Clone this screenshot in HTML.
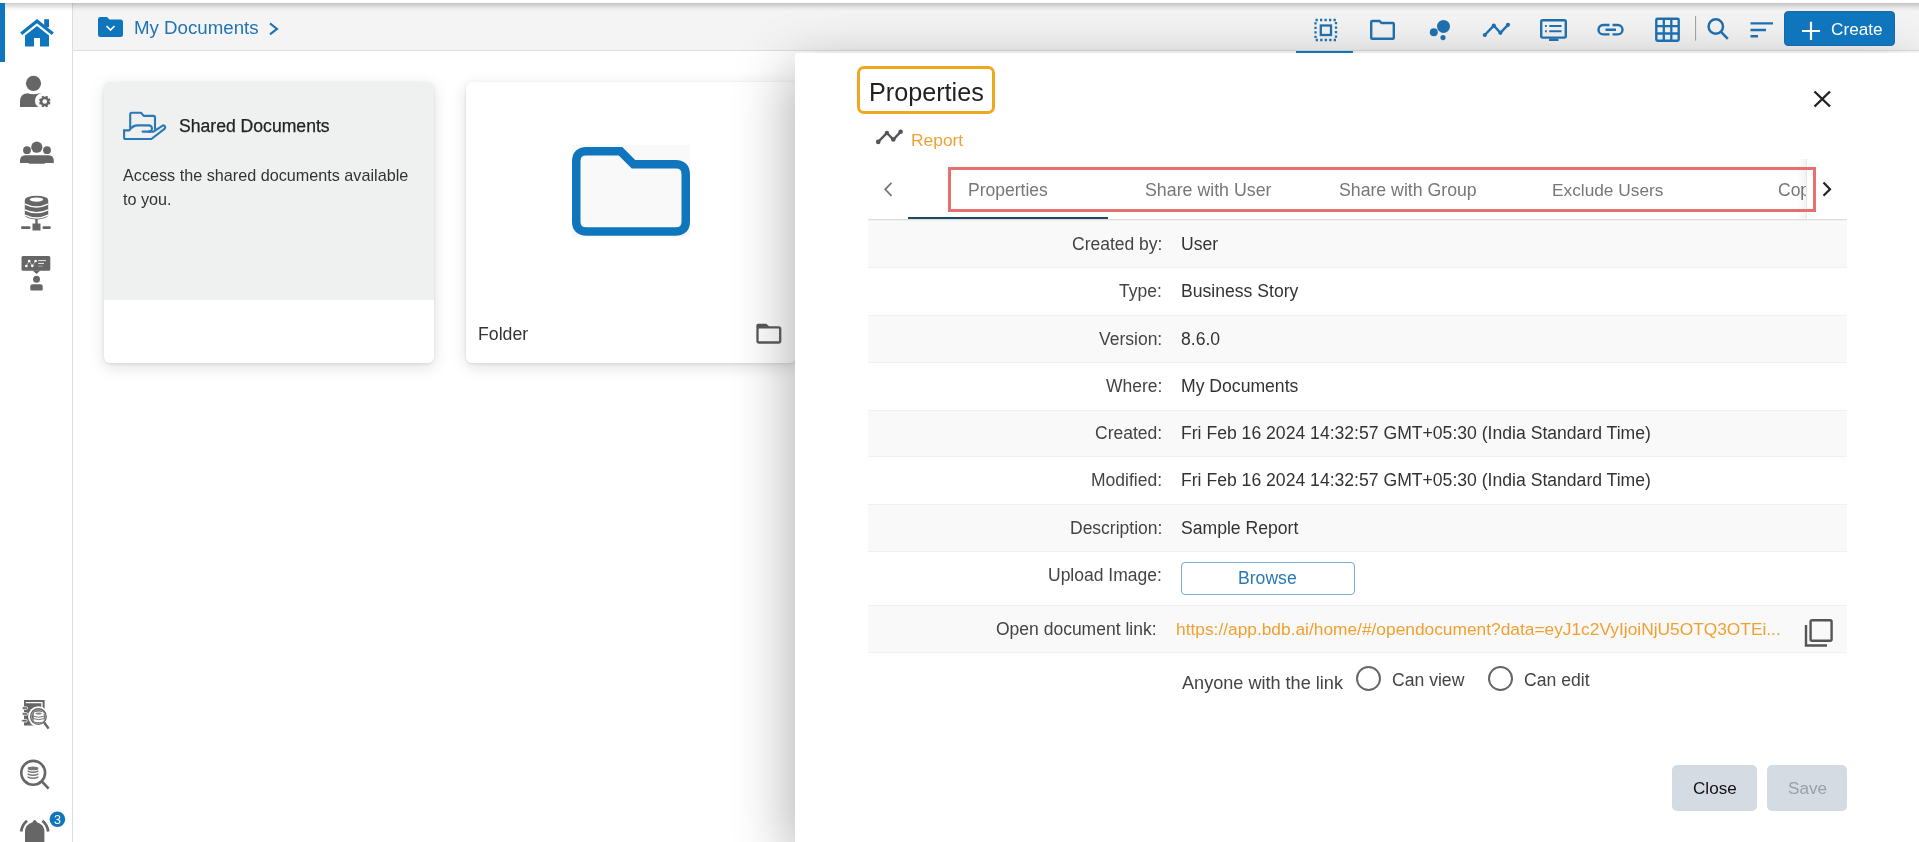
<!DOCTYPE html>
<html><head><meta charset="utf-8">
<style>
*{box-sizing:border-box;margin:0;padding:0}
html,body{width:1919px;height:842px;overflow:hidden;background:#fff;font-family:"Liberation Sans",sans-serif;color:#333}
.abs{position:absolute}
#sidebar{position:absolute;left:0;top:3px;width:73px;height:839px;background:#fff;border-right:1px solid #dcdcdc}
#activebar{position:absolute;left:0;top:3px;width:5px;height:59px;background:#0f75bc;z-index:60}
#header{position:absolute;left:73px;top:3px;width:1846px;height:48px;background:#f4f4f4;border-bottom:1px solid #dedede}
#topshadow{position:absolute;left:0;top:3px;width:1919px;height:8px;background:linear-gradient(rgba(0,0,0,.2),rgba(0,0,0,.1) 40%,rgba(0,0,0,.03) 75%,rgba(0,0,0,0));z-index:50}
.card{position:absolute;top:82px;height:281px;border-radius:6px;background:#fff;box-shadow:0 4px 16px rgba(0,0,0,.13),0 1px 3px rgba(0,0,0,.09);overflow:hidden}
#panel{position:absolute;left:795px;top:53px;width:1124px;height:789px;background:#fff;box-shadow:-6px 14px 56px rgba(0,0,0,.30);border-top-left-radius:3px}
.t{position:absolute;white-space:nowrap;line-height:1;will-change:transform}
.row{position:absolute;left:868px;width:979px}
.row.g{background:#f9f9f9}
.row{box-shadow:inset 0 1px 0 #f0f0f0}
.lbl{position:absolute;will-change:transform;right:685px;white-space:nowrap;font-size:17.5px;color:#444;line-height:1}
.val{position:absolute;will-change:transform;left:313px;white-space:nowrap;font-size:17.6px;color:#333;line-height:1}
#icons{position:absolute;left:0;top:0;width:1919px;height:842px;z-index:100}
</style></head>
<body>
<div id="sidebar"></div>
<div id="activebar"></div>
<div id="header">
  <div class="t" style="left:61px;top:16px;font-size:18.7px;color:#1f74b5">My Documents</div>
</div>
<div id="topshadow"></div>

<!-- cards -->
<div class="card" style="left:104px;width:330px;">
  <div class="abs" style="left:0;top:0;width:330px;height:218px;background:#eff0f0"></div>
  <div class="t" style="left:75px;top:36px;font-size:17.6px;color:#222;-webkit-text-stroke:0.25px #222">Shared Documents</div>
  <div class="t" style="left:19px;top:81px;font-size:16.2px;color:#333;line-height:24px">Access the shared documents available<br>to you.</div>
</div>
<div class="card" style="left:466px;width:330px;">
  <div class="t" style="left:12px;top:244px;font-size:17.7px;color:#333">Folder</div>
</div>

<div id="panel"></div>

<!-- panel content -->
<div class="abs" style="left:857px;top:66px;width:138px;height:48px;border:3px solid #efa71e;border-radius:7px;z-index:10"></div>
<div class="t" style="left:869px;top:80px;font-size:25.2px;color:#222;z-index:11">Properties</div>
<div class="t" style="left:911px;top:132px;font-size:17.4px;color:#eea234;z-index:11">Report</div>

<!-- tabs -->
<div class="abs" style="left:908px;top:159px;width:899px;height:60px;overflow:hidden;z-index:10">
  <div class="t" style="left:60px;top:23px;font-size:17.5px;color:#777">Properties</div>
  <div class="t" style="left:237px;top:23px;font-size:17.8px;color:#777">Share with User</div>
  <div class="t" style="left:431px;top:23px;font-size:17.7px;color:#777">Share with Group</div>
  <div class="t" style="left:644px;top:23px;font-size:17.3px;color:#777">Exclude Users</div>
  <div class="t" style="left:870px;top:23px;font-size:17.5px;color:#777">Copy Link</div>
  <div class="abs" style="left:0;top:58px;width:200px;height:2px;background:#1f4c62"></div>
  <div class="abs" style="left:889px;top:0;width:10px;height:60px;background:linear-gradient(90deg,rgba(0,0,0,0),rgba(0,0,0,.05))"></div>
</div>
<div class="abs" style="left:1806px;top:159px;width:1px;height:60px;background:#e6e6e6;z-index:12"></div>
<div class="abs" style="left:948px;top:167px;width:868px;height:45px;border:3.6px solid #e5706f;z-index:20"></div>
<div class="abs" style="left:868px;top:219px;width:979px;height:1px;background:#dedede;z-index:10"></div>

<!-- rows -->
<div class="row g" style="top:220px;height:47px"><div class="lbl" style="top:16px">Created by:</div><div class="val" style="top:16px">User</div></div>
<div class="row" style="top:267px;height:48px"><div class="lbl" style="top:16px">Type:</div><div class="val" style="top:16px">Business Story</div></div>
<div class="row g" style="top:315px;height:47px"><div class="lbl" style="top:16px">Version:</div><div class="val" style="top:16px">8.6.0</div></div>
<div class="row" style="top:362px;height:48px"><div class="lbl" style="top:16px">Where:</div><div class="val" style="top:16px">My Documents</div></div>
<div class="row g" style="top:410px;height:46px"><div class="lbl" style="top:15px">Created:</div><div class="val" style="top:15px">Fri Feb 16 2024 14:32:57 GMT+05:30 (India Standard Time)</div></div>
<div class="row" style="top:456px;height:48px"><div class="lbl" style="top:16px">Modified:</div><div class="val" style="top:16px">Fri Feb 16 2024 14:32:57 GMT+05:30 (India Standard Time)</div></div>
<div class="row g" style="top:504px;height:47px"><div class="lbl" style="top:16px">Description:</div><div class="val" style="top:16px">Sample Report</div></div>
<div class="row" style="top:551px;height:54px"><div class="lbl" style="top:16px">Upload Image:</div>
  <div class="abs" style="left:313px;top:11px;width:174px;height:33px;border:1px solid #7aaed6;border-radius:4px;background:#fff"></div>
  <div class="t" style="left:370px;top:19px;font-size:17.6px;color:#2a78b6">Browse</div>
</div>
<div class="row g" style="top:605px;height:47px"><div class="lbl" style="top:16px;right:690px">Open document link:</div>
  <div class="t" style="left:308px;top:16px;font-size:17.34px;color:#f0a030">https://app.bdb.ai/home/#/opendocument?data=eyJ1c2VyIjoiNjU5OTQ3OTEi...</div>
</div>
<div class="abs" style="left:868px;top:652px;width:979px;height:1px;background:#f0f0f0"></div>
<div class="t" style="left:1182px;top:674px;font-size:18.1px;color:#444">Anyone with the link</div>
<div class="abs" style="left:1356px;top:666px;width:25px;height:25px;border:2px solid #666;border-radius:50%"></div>
<div class="t" style="left:1392px;top:672px;font-size:17.6px;color:#444">Can view</div>
<div class="abs" style="left:1488px;top:666px;width:25px;height:25px;border:2px solid #666;border-radius:50%"></div>
<div class="t" style="left:1524px;top:672px;font-size:17.6px;color:#444">Can edit</div>

<!-- footer buttons -->
<div class="abs" style="left:1672px;top:765px;width:85px;height:46px;background:#d5dbe3;border-radius:5px"></div>
<div class="t" style="left:1693px;top:780px;font-size:17.1px;color:#111">Close</div>
<div class="abs" style="left:1767px;top:765px;width:80px;height:46px;background:#d5dbe3;border-radius:5px"></div>
<div class="t" style="left:1788px;top:780px;font-size:17.1px;color:#9aa0a6">Save</div>

<!-- header create button -->
<div class="abs" style="left:1784px;top:11px;width:111px;height:35px;background:#0f75bc;border:1px solid #1769a8;border-radius:4px"></div>
<div class="t" style="left:1831px;top:21px;font-size:17.2px;color:#fff">Create</div>
<div class="abs" style="left:1296px;top:51px;width:57px;height:2px;background:#0f75bc"></div>

<svg id="icons" width="1919" height="842" viewBox="0 0 1919 842">
<!-- home -->
<g fill="#0f75bc">
  <path d="M20.2,32.6 L37,19.1 L53.8,32.6 L51.8,35.1 L37,23.3 L22.2,35.1 Z"/>
  <rect x="44.2" y="19.2" width="4.8" height="8"/>
  <path d="M25,35.4 L37,25.9 L49,35.4 L49,46.6 L40,46.6 L40,38 L34,38 L34,46.6 L25,46.6 Z"/>
</g>
<!-- breadcrumb folder -->
<path d="M98,19.5 Q98,17 100.5,17 L107,17 L109.5,19.5 L120.5,19.5 Q123,19.5 123,22 L123,34.5 Q123,37 120.5,37 L100.5,37 Q98,37 98,34.5 Z" fill="#0f75bc"/>
<path d="M106.5,26 L110.5,30 L114.5,26" fill="none" stroke="#fff" stroke-width="1.6"/>
<path d="M270,23.4 L277,28.9 L270,34.4" fill="none" stroke="#1f74b5" stroke-width="2.1"/>
<!-- user gear -->
<g fill="#666">
  <circle cx="33.5" cy="83.3" r="7.6"/>
  <path d="M20,107 L20,101.5 Q20,93.6 27.5,93.3 Q33.5,95.2 39.5,93.3 L41.8,93.3 A7.4,7.4 0 0 0 38.6,107 Z"/>
  <circle cx="44.75" cy="101.5" r="3.5" fill="none" stroke="#666" stroke-width="2.4"/>
  <g stroke="#666" stroke-width="2.4"><line x1="48.26" y1="102.95" x2="50.11" y2="103.72"/><line x1="46.20" y1="105.01" x2="46.97" y2="106.86"/><line x1="43.30" y1="105.01" x2="42.53" y2="106.86"/><line x1="41.24" y1="102.95" x2="39.39" y2="103.72"/><line x1="41.24" y1="100.05" x2="39.39" y2="99.28"/><line x1="43.30" y1="97.99" x2="42.53" y2="96.14"/><line x1="46.20" y1="97.99" x2="46.97" y2="96.14"/><line x1="48.26" y1="100.05" x2="50.11" y2="99.28"/></g>
</g>
<!-- group -->
<g fill="#666">
  <circle cx="36.8" cy="147.2" r="5.6"/>
  <circle cx="27" cy="150.2" r="3.9"/>
  <circle cx="47" cy="150.2" r="3.9"/>
  <path d="M20,161 Q20,155.5 25,155.3 L48.8,155.3 Q53.8,155.5 53.8,161 L53.8,163 L20,163 Z"/>
  <path d="M28,156 L45.6,156 Q47,163.8 44,163.8 L29.6,163.8 Q26.6,163.8 28,156 Z"/>
</g>
<!-- database network -->
<g fill="#666">
  <path d="M24.8,200 A11.7,4.2 0 0 1 48.2,200 L48.2,215 A11.7,4.4 0 0 1 24.8,215 Z"/>
  <ellipse cx="36.5" cy="199.6" rx="6.8" ry="2.1" fill="#fff"/>
  <path d="M24.8,204.2 Q36.5,209.8 48.2,204.2 M24.8,209.8 Q36.5,215.4 48.2,209.8 M24.8,215.2 Q36.5,220.8 48.2,215.2" fill="none" stroke="#fff" stroke-width="1.3"/>
  <rect x="35.3" y="219" width="2.4" height="5"/>
  <rect x="32.5" y="223.5" width="8" height="7"/>
  <rect x="21" y="226.3" width="9.5" height="2.6" rx="1.2"/>
  <rect x="42.5" y="226.3" width="8.3" height="2.6" rx="1.2"/>
</g>
<!-- presentation -->
<g fill="#666">
  <rect x="21.5" y="256" width="28.8" height="14.8" rx="1.5"/>
  <path d="M32.6,270.5 L36.5,274 L40.4,270.5 Z"/>
  <circle cx="36.5" cy="279.2" r="3.5"/>
  <path d="M30.3,289.8 L30.3,286.6 Q30.3,284.2 33,284.2 L40,284.2 Q42.7,284.2 42.7,286.6 L42.7,289.8 Q42.7,290.6 41.8,290.6 L31.2,290.6 Q30.3,290.6 30.3,289.8 Z"/>
  <polyline points="26.3,266 29.2,261 32.3,265.8 35.6,261" fill="none" stroke="#bbb" stroke-width="0.8"/>
  <g fill="#fff"><circle cx="26.3" cy="266" r="1.35"/><circle cx="29.2" cy="261" r="1.35"/><circle cx="32.3" cy="265.8" r="1.35"/><circle cx="35.6" cy="261" r="1.35"/></g>
  <rect x="38.2" y="260.1" width="7.8" height="1" fill="#eee"/>
  <rect x="38.2" y="262.9" width="5.8" height="1" fill="#eee"/>
  <rect x="38.2" y="265.6" width="4.6" height="1.2" fill="#999"/>
</g>
<!-- book search -->
<g>
  <rect x="24" y="700" width="20.6" height="25.5" fill="#666"/>
  <path d="M25.8,702.6 L41.9,702.6 L41.9,708.5" fill="none" stroke="#fff" stroke-width="1.3"/>
  <rect x="22" y="706.8" width="5.6" height="2.6" rx="1.3" fill="#666" stroke="#fff" stroke-width="0.8"/>
  <rect x="22" y="712.6" width="5.6" height="2.6" rx="1.3" fill="#666" stroke="#fff" stroke-width="0.8"/>
  <rect x="21.6" y="719.4" width="5.6" height="2.6" rx="1.3" fill="#666" stroke="#fff" stroke-width="0.8"/>
  <line x1="44" y1="722" x2="48.6" y2="728.6" stroke="#fff" stroke-width="4.2"/>
  <circle cx="38.4" cy="716.6" r="10.3" fill="#fff"/>
  <circle cx="38.4" cy="716.6" r="8.5" fill="#666"/>
  <circle cx="38.4" cy="716.6" r="6.9" fill="none" stroke="#fff" stroke-width="0.7" opacity="0.6"/>
  <line x1="44.2" y1="722.5" x2="48.6" y2="728.6" stroke="#666" stroke-width="2.4"/>
  <path d="M33.7,713.8 A5.05,2.2 0 0 1 43.8,713.8 L43.8,720 A5.05,2.2 0 0 1 33.7,720 Z" fill="#fff"/>
  <ellipse cx="38.75" cy="713.6" rx="3.2" ry="1.1" fill="#888"/>
  <path d="M33.7,716.2 Q38.75,718.4 43.8,716.2 M33.7,718.6 Q38.75,720.8 43.8,718.6" fill="none" stroke="#666" stroke-width="0.9"/>
</g>
<!-- db search -->
<g fill="#777">
  <circle cx="33.2" cy="772.8" r="11.9" fill="none" stroke="#666" stroke-width="2.6"/>
  <line x1="41.6" y1="781.2" x2="48.6" y2="788.6" stroke="#666" stroke-width="2.6"/>
  <ellipse cx="33" cy="768.4" rx="5.4" ry="1.9"/>
  <path d="M27.6,770.2 Q33,772.8 38.4,770.2 L38.4,771.8 Q33,774.4 27.6,771.8 Z"/>
  <path d="M27.6,773.2 Q33,775.8 38.4,773.2 L38.4,774.8 Q33,777.4 27.6,774.8 Z"/>
  <path d="M27.6,776.2 Q33,778.8 38.4,776.2 L38.4,777.8 Q33,780.4 27.6,777.8 Z"/>
</g>
<!-- bell -->
<g fill="#666">
  <path d="M25,842 L25,832 Q25,824.5 32.5,822.3 L33.2,821 Q34.7,818.8 36.2,821 L36.9,822.3 Q44.4,824.5 44.4,832 L44.4,842 Z"/>
  <path d="M21.2,831.5 Q22,825 27,820.8" fill="none" stroke="#666" stroke-width="2.8"/>
  <path d="M48.2,831.5 Q47.4,825 42.4,820.8" fill="none" stroke="#666" stroke-width="2.8"/>
</g>
<circle cx="57.4" cy="819.3" r="7.8" fill="#0f75bc"/>
<text x="57.4" y="823.6" font-family="Liberation Sans" font-weight="normal" font-size="12.5" fill="#fff" text-anchor="middle">3</text>

<!-- header icons -->
<g fill="none" stroke="#1f6fae" stroke-width="2.3">
  <rect x="1315.5" y="20" width="20.5" height="20" stroke-dasharray="2.3 2.2"/>
  <rect x="1320.8" y="25.5" width="10.2" height="9.5"/>
  <path d="M1371.2,22 Q1371.2,21 1372.2,21 L1379.5,21 L1381.5,23 L1392.8,23 Q1393.8,23 1393.8,24 L1393.8,37.8 Q1393.8,38.8 1392.8,38.8 L1372.2,38.8 Q1371.2,38.8 1371.2,37.8 Z" stroke-width="2.4"/>
</g>
<g fill="#1f6fae">
  <circle cx="1443.5" cy="26.4" r="6.5"/>
  <circle cx="1433.8" cy="32.2" r="4"/>
  <circle cx="1443" cy="37.6" r="2.6"/>
</g>
<g fill="#1f6fae" stroke="#1f6fae">
  <polyline points="1484.8,35 1493.8,25.6 1500.4,32.8 1508,24.8" fill="none" stroke-width="2.4"/>
  <circle cx="1484.8" cy="35" r="2.1" stroke="none"/>
  <circle cx="1493.8" cy="25.6" r="2.1" stroke="none"/>
  <circle cx="1500.4" cy="32.8" r="2.1" stroke="none"/>
  <circle cx="1508" cy="24.8" r="2.1" stroke="none"/>
</g>
<g fill="none" stroke="#1f6fae" stroke-width="2.4">
  <rect x="1541.2" y="20.2" width="24.6" height="17.4" rx="1.5"/>
  <path d="M1549.3,26 L1561.5,26 M1549.3,31.3 L1561.5,31.3" stroke-width="2"/>
  <path d="M1545,26 L1546.8,26 M1545,31.3 L1546.8,31.3" stroke-width="2"/>
  <path d="M1549,39.8 L1558.5,39.8" stroke-width="2.4"/>
  <path d="M1609.5,25 L1603.2,25 A4.7,4.7 0 0 0 1603.2,34.4 L1609.5,34.4 M1612.5,25 L1617.8,25 A4.7,4.7 0 0 1 1617.8,34.4 L1612.5,34.4 M1605.5,29.7 L1616,29.7" stroke-width="2.4"/>
  <rect x="1656.3" y="18.8" width="22.4" height="22" rx="1.2"/>
  <path d="M1663.8,18.8 L1663.8,40.8 M1671.3,18.8 L1671.3,40.8 M1656.3,26.1 L1678.7,26.1 M1656.3,33.5 L1678.7,33.5" stroke-width="2.3"/>
  <circle cx="1715.8" cy="26.5" r="7.2" stroke-width="2.5"/>
  <line x1="1721" y1="31.8" x2="1727.8" y2="38.8" stroke-width="2.6"/>
  <path d="M1750.5,23.4 L1773,23.4 M1750.5,30 L1766,30 M1750.5,36.3 L1758,36.3" stroke-width="2.4"/>
</g>
<line x1="1695.6" y1="16" x2="1695.6" y2="40.6" stroke="#999" stroke-width="1"/>
<path d="M1802,31 L1820,31 M1811,21.8 L1811,40" stroke="#fff" stroke-width="2.2"/>

<!-- big folder in card -->
<rect x="572" y="145" width="118" height="92" fill="#f9f9f9"/>
<path d="M576.25,161.5 Q576.25,151.25 586.5,151.25 L620.5,151.25 L633.5,164.25 L675.5,164.25 Q685.75,164.25 685.75,174.5 L685.75,221.5 Q685.75,231.5 675.5,231.5 L586.5,231.5 Q576.25,231.5 576.25,221.5 Z" fill="none" stroke="#0f75bc" stroke-width="8.5" stroke-linejoin="miter"/>
<!-- small folder in card -->
<rect x="757.5" y="327.3" width="22.7" height="15.2" rx="1.6" fill="none" stroke="#555" stroke-width="2.3"/>
<path d="M756.4,328 L756.4,325.2 Q756.4,323.7 757.9,323.7 L766.3,323.7 L769,326.3 L769,328 Z" fill="#555"/>
<!-- shared docs hand -->
<g fill="none" stroke="#2a78b8" stroke-width="2.1" stroke-linejoin="round" stroke-linecap="round">
  <path d="M130.2,128 L130.2,114.4 Q130.2,112.8 131.8,112.8 L141,112.8 L143.7,115.9 L153.4,115.9 Q155,115.9 155,117.5 L155,129"/>
  <path d="M124.1,130.4 L129.3,130.4 Q132.5,125.4 137.8,125.4 L148.9,125.4 A3.1,3.1 0 0 1 148.9,131.6 L142.6,131.6"/>
  <path d="M148.9,131.6 L153.5,131.6 L162.3,125.8 A1.9,1.9 0 0 1 164.8,128.6 L151.4,139 L125.7,139 Q124.1,139 124.1,137.4 L124.1,130.4"/>
</g>
<!-- report icon -->
<g fill="#555">
  <polyline points="878.2,141.9 886.9,133 893.3,139.5 900.6,131.8" fill="none" stroke="#555" stroke-width="2.4"/>
  <circle cx="878.2" cy="141.9" r="2.3"/><circle cx="886.9" cy="133" r="2.2"/><circle cx="893.3" cy="139.5" r="2.3"/><circle cx="900.6" cy="131.8" r="2.3"/>
</g>
<!-- close X -->
<path d="M1814.5,91.5 L1830,106.5 M1830,91.5 L1814.5,106.5" stroke="#222" stroke-width="2.4"/>
<!-- tab arrows -->
<path d="M891.5,182.8 L885.2,189.3 L891.5,195.8" fill="none" stroke="#777" stroke-width="1.8"/>
<path d="M1823.5,182.5 L1830,189.2 L1823.5,195.8" fill="none" stroke="#222" stroke-width="2.2"/>
<!-- copy icon -->
<g fill="none" stroke="#555" stroke-width="2.4">
  <rect x="1810.6" y="620.2" width="21" height="20.5" rx="1.5"/>
  <path d="M1806,625 L1806,645.5 L1827,645.5"/>
</g>
</svg>
</body></html>
